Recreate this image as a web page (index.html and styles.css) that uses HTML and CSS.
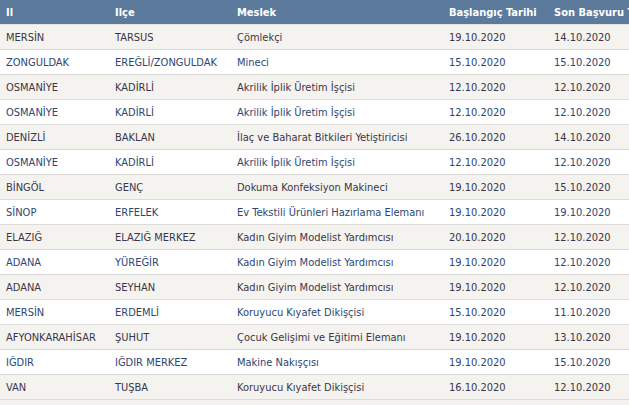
FILE: index.html
```html
<!DOCTYPE html>
<html lang="tr">
<head>
<meta charset="utf-8">
<link rel="stylesheet" href="styles.css">
</head>
<body>
<div class="wrap">
<table class="grid">
<colgroup><col class="c1"><col class="c2"><col class="c3"><col class="c4"><col class="c5"></colgroup>
<thead>
<tr><th>Il</th><th>Ilçe</th><th>Meslek</th><th>Başlangıç Tarihi</th><th>Son Başvuru Tarihi</th></tr>
</thead>
<tbody>
<tr class="odd"><td>MERSİN</td><td>TARSUS</td><td>Çömlekçi</td><td>19.10.2020</td><td>14.10.2020</td></tr>
<tr class="even"><td>ZONGULDAK</td><td>EREĞLİ/ZONGULDAK</td><td>Mineci</td><td>15.10.2020</td><td>15.10.2020</td></tr>
<tr class="odd"><td>OSMANİYE</td><td>KADİRLİ</td><td>Akrilik İplik Üretim İşçisi</td><td>12.10.2020</td><td>12.10.2020</td></tr>
<tr class="even"><td>OSMANİYE</td><td>KADİRLİ</td><td>Akrilik İplik Üretim İşçisi</td><td>12.10.2020</td><td>12.10.2020</td></tr>
<tr class="odd"><td>DENİZLİ</td><td>BAKLAN</td><td>İlaç ve Baharat Bitkileri Yetiştiricisi</td><td>26.10.2020</td><td>14.10.2020</td></tr>
<tr class="even"><td>OSMANİYE</td><td>KADİRLİ</td><td>Akrilik İplik Üretim İşçisi</td><td>12.10.2020</td><td>12.10.2020</td></tr>
<tr class="odd"><td>BİNGÖL</td><td>GENÇ</td><td>Dokuma Konfeksiyon Makineci</td><td>19.10.2020</td><td>15.10.2020</td></tr>
<tr class="even"><td>SİNOP</td><td>ERFELEK</td><td>Ev Tekstili Ürünleri Hazırlama Elemanı</td><td>19.10.2020</td><td>19.10.2020</td></tr>
<tr class="odd"><td>ELAZIĞ</td><td>ELAZIĞ MERKEZ</td><td>Kadın Giyim Modelist Yardımcısı</td><td>20.10.2020</td><td>12.10.2020</td></tr>
<tr class="even"><td>ADANA</td><td>YÜREĞİR</td><td>Kadın Giyim Modelist Yardımcısı</td><td>19.10.2020</td><td>12.10.2020</td></tr>
<tr class="odd"><td>ADANA</td><td>SEYHAN</td><td>Kadın Giyim Modelist Yardımcısı</td><td>19.10.2020</td><td>12.10.2020</td></tr>
<tr class="even"><td>MERSİN</td><td>ERDEMLİ</td><td>Koruyucu Kıyafet Dikişçisi</td><td>15.10.2020</td><td>11.10.2020</td></tr>
<tr class="odd"><td>AFYONKARAHİSAR</td><td>ŞUHUT</td><td>Çocuk Gelişimi ve Eğitimi Elemanı</td><td>19.10.2020</td><td>13.10.2020</td></tr>
<tr class="even"><td>IĞDIR</td><td>IĞDIR MERKEZ</td><td>Makine Nakışçısı</td><td>19.10.2020</td><td>15.10.2020</td></tr>
<tr class="odd"><td>VAN</td><td>TUŞBA</td><td>Koruyucu Kıyafet Dikişçisi</td><td>16.10.2020</td><td>12.10.2020</td></tr>
</tbody>
</table>
</div>
</body>
</html>
```
FILE: styles.css
```css
html, body {
  margin: 0;
  padding: 0;
  background: #f4f2ee;
  overflow: hidden;
}
.wrap {
  width: 680px;
}
.grid {
  border-collapse: collapse;
  table-layout: fixed;
  width: 680px;
  font-family: "DejaVu Sans Condensed", "DejaVu Sans", Verdana, sans-serif;
  font-stretch: condensed;
  font-size: 11px;
}
.c1 { width: 109px; }
.c2 { width: 122px; }
.c3 { width: 212px; }
.c4 { width: 105px; }
.c5 { width: 132px; }
.grid th {
  background: #5b7a9c;
  color: #ffffff;
  font-weight: bold;
  text-align: left;
  height: 24px;
  padding: 0 6px;
  white-space: nowrap;
  border-bottom: 1px solid #e4e2de;
}
.grid td {
  height: 24px;
  padding: 0 6px;
  white-space: nowrap;
  border-bottom: 1px solid #dcdad6;
}
.odd td {
  background: #f5f3ef;
  color: #3a3648;
}
.even td {
  background: #ffffff;
  color: #2b4673;
}
```
